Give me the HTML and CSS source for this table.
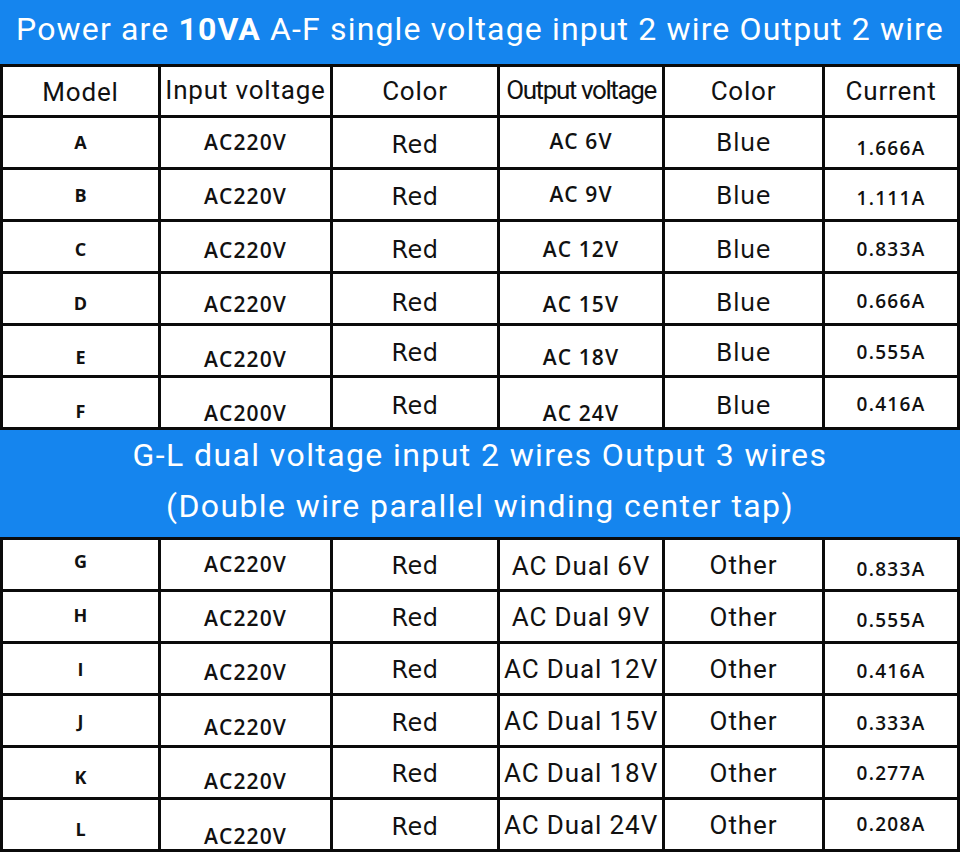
FILE: index.html
```html
<!DOCTYPE html>
<html lang="en">
<head>
<meta charset="utf-8">
<title>10VA transformer models</title>
<link rel="stylesheet" href="styles.css">
</head>
<body>
<div class="page">
  <div class="banner banner-top">
    <p>Power are <b>10VA</b> A-F single voltage input 2 wire Output 2 wire</p>
  </div>

  <div class="grid grid-a">
    <div class="cell hd d1">Model</div>
    <div class="cell hd u1">Input voltage</div>
    <div class="cell hd">Color</div>
    <div class="cell hd narrow u1">Output voltage</div>
    <div class="cell hd">Color</div>
    <div class="cell hd">Current</div>

    <div class="cell lt u1">A</div>
    <div class="cell ac">AC220V</div>
    <div class="cell cl d2">Red</div>
    <div class="cell ac u1">AC 6V</div>
    <div class="cell cl">Blue</div>
    <div class="cell cur d6">1.666A</div>

    <div class="cell lt">B</div>
    <div class="cell ac d2">AC220V</div>
    <div class="cell cl d2">Red</div>
    <div class="cell ac">AC 9V</div>
    <div class="cell cl d1">Blue</div>
    <div class="cell cur d4">1.111A</div>

    <div class="cell lt d2">C</div>
    <div class="cell ac d4">AC220V</div>
    <div class="cell cl d3">Red</div>
    <div class="cell ac d3">AC 12V</div>
    <div class="cell cl d3">Blue</div>
    <div class="cell cur d3">0.833A</div>

    <div class="cell lt d4">D</div>
    <div class="cell ac d6">AC220V</div>
    <div class="cell cl d4">Red</div>
    <div class="cell ac d6">AC 15V</div>
    <div class="cell cl d4">Blue</div>
    <div class="cell cur d3">0.666A</div>

    <div class="cell lt d6">E</div>
    <div class="cell ac d9">AC220V</div>
    <div class="cell cl d2">Red</div>
    <div class="cell ac d7">AC 18V</div>
    <div class="cell cl d2">Blue</div>
    <div class="cell cur d2">0.555A</div>

    <div class="cell lt d8">F</div>
    <div class="cell ac d11">AC200V</div>
    <div class="cell cl d3">Red</div>
    <div class="cell ac d11">AC 24V</div>
    <div class="cell cl d3">Blue</div>
    <div class="cell cur d2">0.416A</div>
  </div>

  <div class="banner banner-mid">
    <p>G-L dual voltage input 2 wires Output 3 wires</p>
    <p>(Double wire parallel winding center tap)</p>
  </div>

  <div class="grid grid-b">
    <div class="cell lt u4">G</div>
    <div class="cell ac">AC220V</div>
    <div class="cell cl d1">Red</div>
    <div class="cell dual d1">AC Dual 6V</div>
    <div class="cell oth">Other</div>
    <div class="cell cur d5">0.833A</div>

    <div class="cell lt u2">H</div>
    <div class="cell ac d2">AC220V</div>
    <div class="cell cl d1">Red</div>
    <div class="cell dual">AC Dual 9V</div>
    <div class="cell oth">Other</div>
    <div class="cell cur d4">0.555A</div>

    <div class="cell lt">I</div>
    <div class="cell ac d4">AC220V</div>
    <div class="cell cl d1">Red</div>
    <div class="cell dual">AC Dual 12V</div>
    <div class="cell oth">Other</div>
    <div class="cell cur d3">0.416A</div>

    <div class="cell lt">J</div>
    <div class="cell ac d7">AC220V</div>
    <div class="cell cl d2">Red</div>
    <div class="cell dual">AC Dual 15V</div>
    <div class="cell oth">Other</div>
    <div class="cell cur d3">0.333A</div>

    <div class="cell lt d4">K</div>
    <div class="cell ac d9">AC220V</div>
    <div class="cell cl d1">Red</div>
    <div class="cell dual">AC Dual 18V</div>
    <div class="cell oth">Other</div>
    <div class="cell cur d1">0.277A</div>

    <div class="cell lt d4">L</div>
    <div class="cell ac d12">AC220V</div>
    <div class="cell cl d2">Red</div>
    <div class="cell dual">AC Dual 24V</div>
    <div class="cell oth">Other</div>
    <div class="cell cur">0.208A</div>
  </div>
</div>
</body>
</html>
```

FILE: styles.css
```css
html, body {
  margin: 0;
  padding: 0;
  background: #ffffff;
}

.page {
  width: 960px;
  height: 853px;
  overflow: hidden;
  display: flex;
  flex-direction: column;
}

.banner {
  background: #1585ee;
  color: #ffffff;
  font-family: Roboto, "Liberation Sans", sans-serif;
  display: flex;
  flex-direction: column;
  align-items: center;
  justify-content: center;
  box-sizing: border-box;
}

.banner p {
  margin: 0;
  white-space: nowrap;
  line-height: 1.15;
}

.banner b {
  font-weight: 700;
}

.banner-top {
  height: 64px;
  font-size: 32px;
  letter-spacing: 1.15px;
  padding-bottom: 6px;
}

.banner-mid {
  height: 107px;
  font-size: 32px;
  letter-spacing: 1.4px;
  gap: 14px;
  padding-bottom: 6px;
}

.grid {
  display: grid;
  grid-template-columns: 155px 169px 164px 162px 157px 132px;
  gap: 3px;
  padding: 3px;
  background: #0b0b0b;
}

.grid-a {
  grid-template-rows: 48px repeat(6, 49px);
}

.grid-b {
  grid-template-rows: repeat(6, 49px);
}

.cell {
  background: #ffffff;
  color: #111111;
  display: flex;
  align-items: center;
  justify-content: center;
  line-height: 1;
  white-space: nowrap;
  box-sizing: border-box;
}

.hd {
  font-family: Roboto, "Liberation Sans", sans-serif;
  font-size: 26px;
  letter-spacing: 0.8px;
}

.hd.narrow {
  letter-spacing: -1.4px;
}

.lt {
  font-family: "Open Sans", sans-serif;
  font-weight: 700;
  font-size: 18px;
}

.ac {
  font-family: "Open Sans", sans-serif;
  font-weight: 600;
  font-size: 21px;
  letter-spacing: 1.1px;
}

.cl {
  font-family: "DejaVu Sans", sans-serif;
  font-size: 24px;
  letter-spacing: 0.5px;
}

.cur {
  font-family: "Open Sans", sans-serif;
  font-weight: 600;
  font-size: 19px;
  letter-spacing: 1.3px;
}

.dual,
.oth {
  font-family: Roboto, "Liberation Sans", sans-serif;
  font-size: 26px;
  letter-spacing: 0.9px;
}

/* vertical nudges of the cell text (padding shifts the centre by half) */
.d1 { padding-top: 2px; }
.d2 { padding-top: 4px; }
.d3 { padding-top: 6px; }
.d4 { padding-top: 8px; }
.d5 { padding-top: 10px; }
.d6 { padding-top: 12px; }
.d7 { padding-top: 14px; }
.d8 { padding-top: 16px; }
.d9 { padding-top: 18px; }
.d11 { padding-top: 22px; }
.d12 { padding-top: 24px; }
.u1 { padding-bottom: 2px; }
.u2 { padding-bottom: 4px; }
.u4 { padding-bottom: 8px; }
```
